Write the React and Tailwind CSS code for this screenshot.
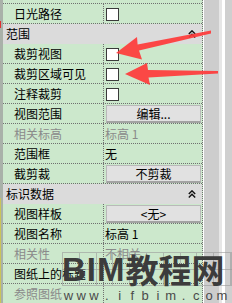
import React from 'react'

const font = { fontFamily: '"Noto Sans CJK SC", "Noto Sans", sans-serif' }

const rows = [
  { label: '日光路径', kind: 'check' },
  { header: '范围' },
  { label: '裁剪视图', kind: 'check' },
  { label: '裁剪区域可见', kind: 'check' },
  { label: '注释裁剪', kind: 'check' },
  { label: '视图范围', kind: 'button', value: '编辑...' },
  { label: '相关标高', kind: 'text', value: '标高 1', muted: true },
  { label: '范围框', kind: 'text', value: '无' },
  { label: '截剪裁', kind: 'button', value: '不剪裁' },
  { header: '标识数据' },
  { label: '视图样板', kind: 'button', value: '<无>' },
  { label: '视图名称', kind: 'text', value: '标高 1' },
  { label: '相关性', kind: 'text', value: '不相关', muted: true },
  { label: '图纸上的标题', kind: 'text', value: '' },
  { label: '参照图纸', kind: 'text', value: '', muted: true },
]

function Collapse() {
  return (
    <svg width="8" height="8" viewBox="0 0 8 8" className="shrink-0">
      <polyline points="0.8,4 4,0.8 7.2,4" fill="none" stroke="#111" strokeWidth="1.4" />
      <polyline points="0.8,7.4 4,4.2 7.2,7.4" fill="none" stroke="#111" strokeWidth="1.4" />
    </svg>
  )
}

function Value({ row }) {
  if (row.kind === 'check') {
    return <div className="mt-[4px] ml-[2px] w-[13px] h-[13px] bg-white border border-[#3a3a3a]" />
  }
  if (row.kind === 'button') {
    return (
      <div className="mt-[1px] ml-[2px] mr-[1px] h-[18px] flex items-center justify-center bg-[#e1e1e1] border border-[#b9b9b9] border-b-2 border-b-[#a3a3a3] text-[12px] leading-none text-black">
        {row.value}
      </div>
    )
  }
  return (
    <div className={`pl-[1px] h-[19px] flex items-center text-[12px] leading-none ${row.muted ? 'text-[#8a8a8a]' : 'text-black'}`}>
      {row.value}
    </div>
  )
}

function Row({ row }) {
  if (row.header) {
    return (
      <div className="h-[20px] flex items-center justify-between bg-[#dbdbdb] pl-[3px] pr-[6px] text-[12px] text-black">
        <span>{row.header}</span>
        <Collapse />
      </div>
    )
  }
  return (
    <div className="h-[20px] flex border-b border-dotted border-[#707070]">
      <div className={`w-[101px] shrink-0 pl-[11px] flex items-center text-[12px] leading-none border-r border-dotted border-[#707070] ${row.muted ? 'text-[#8a8a8a]' : 'text-black'}`}>
        {row.label}
      </div>
      <div className="flex-1">
        <Value row={row} />
      </div>
    </div>
  )
}

function Arrows() {
  return (
    <svg className="absolute left-0 top-0" width="232" height="303" viewBox="0 0 232 303">
      <polygon
        points="116,53 137,37 137.6,44.5 211,30.5 211,33.5 139,50.6 142,59.5"
        fill="#ff3a3a"
        opacity="0.92"
      />
      <polygon
        points="125,74 147,63 148,70 218,71 218,73.5 148.5,77.5 150,85"
        fill="#ff3a3a"
        opacity="0.92"
      />
    </svg>
  )
}

function Watermark() {
  const site = 'www.ifbim.com'.split('')
  return (
    <div className="absolute left-[62px] top-[250px] w-[170px] pointer-events-none">
      <div className="relative h-[38px]">
        <div className="absolute inset-x-[0px] top-[2px] h-[34px] grid grid-cols-10 border border-[#9a9a9a]/60">
          {Array.from({ length: 10 }).map((_, i) => (
            <div key={i} className="border-r border-[#9a9a9a]/60" />
          ))}
        </div>
        <div className="absolute inset-x-0 top-[19px] h-px bg-[#9a9a9a]/60" />
        <div
          className="relative flex items-center h-[38px] text-[#3c3c3c] font-bold text-[33px] leading-none"
          style={{ fontFamily: '"Noto Sans CJK SC", "Liberation Sans", sans-serif' }}
        >
          <span className="tracking-[1px]" style={{ fontFamily: '"Liberation Sans", sans-serif' }}>BIM</span>
          <span>教程网</span>
        </div>
      </div>
      <div className="flex mt-[1px] text-[13px] leading-none text-[#4a4a4a]" style={{ fontFamily: '"Liberation Sans", sans-serif' }}>
        {site.map((c, i) => (
          <span key={i} className="w-[12.8px] text-center">{c}</span>
        ))}
      </div>
    </div>
  )
}

export default function App() {
  return (
    <div className="relative w-[232px] h-[303px] overflow-hidden flex bg-[#cce8cc]" style={font}>
      {/* left edge */}
      <div className="w-[3px] shrink-0 flex flex-col bg-[#a9b1a9]">
        <div className="h-[21px]" />
        <div className="h-[7px] w-[1px] bg-[#e03030]" />
        <div className="h-[170px]" />
        <div className="flex-1 w-[1px] bg-[#c9c45a]" />
      </div>

      {/* property grid */}
      <div className="w-[200px] shrink-0 bg-[#cce8cc] border-r border-dotted border-[#707070]">
        <div className="mt-[-16px]">
          <div className="h-[20px] border-b border-dotted border-[#707070]" />
          {rows.map((r, i) => (
            <Row key={i} row={r} />
          ))}
        </div>
      </div>

      {/* scrollbar */}
      <div className="flex-1 flex border-l border-white">
        <div className="w-[15px] bg-[#cdcdcd]" />
        <div className="w-[3px] bg-[#e6e6e6]" />
        <div className="w-[3px] bg-white" />
        <div className="flex-1 bg-[#cfcfcf]" />
      </div>

      <Watermark />
      <Arrows />
    </div>
  )
}
